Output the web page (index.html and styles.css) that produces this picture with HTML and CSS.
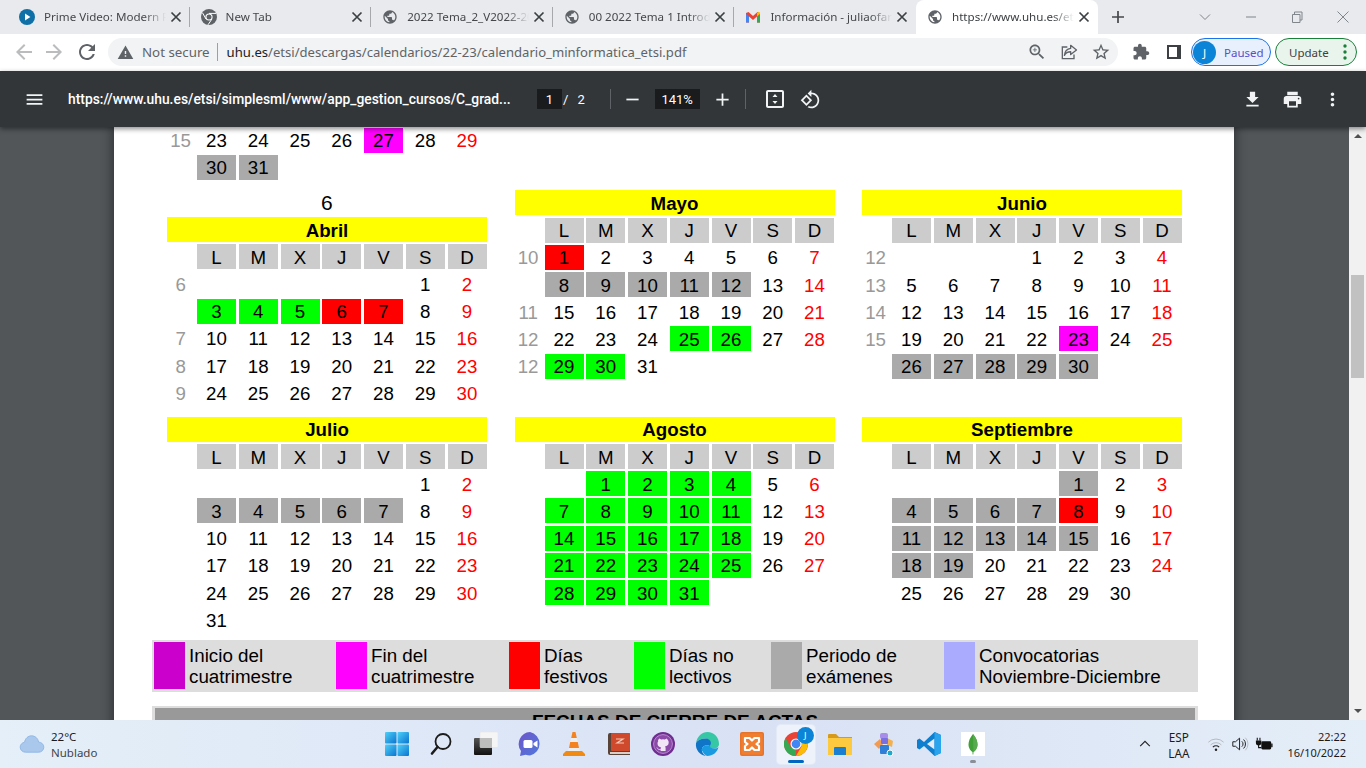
FILE: index.html
```html
<!DOCTYPE html>
<html lang="es">
<head>
    <meta charset="UTF-8">
    <title>calendario_minformatica_etsi.pdf</title>
    <link rel="stylesheet" href="styles.css">
</head>
<body>
    <svg class="defs" width="0" height="0">
        <symbol id="globe" viewBox="0 0 24 24"><path d="M12 2C6.48 2 2 6.48 2 12s4.48 10 10 10 10-4.48 10-10S17.52 2 12 2zm-1 17.93c-3.95-.49-7-3.85-7-7.93 0-.62.08-1.21.21-1.79L9 15v1c0 1.1.9 2 2 2v1.93zm6.9-2.54c-.26-.81-1-1.39-1.9-1.39h-1v-3c0-.55-.45-1-1-1H8v-2h2c.55 0 1-.45 1-1V7h2c1.1 0 2-.9 2-2v-.41c2.93 1.19 5 4.06 5 7.41 0 2.08-.8 3.97-2.1 5.39z"/></symbol>
        <symbol id="close" viewBox="0 0 16 16"><path d="M3.5 3.5l9 9M12.5 3.5l-9 9" stroke="currentColor" stroke-width="1.7" fill="none"/></symbol>
        <linearGradient id="win-grad" x1="0" y1="0" x2="1" y2="1"><stop offset="0" stop-color="#4fd0f8"/><stop offset="1" stop-color="#0a74d0"/></linearGradient>
        <linearGradient id="zoom-grad" x1="0" y1="0" x2="1" y2="1"><stop offset="0" stop-color="#6d55c9"/><stop offset="1" stop-color="#4f78dd"/></linearGradient>
        <linearGradient id="task-grad" x1="0" y1="0" x2="0" y2="1"><stop offset="0" stop-color="#555"/><stop offset="1" stop-color="#111"/></linearGradient>
    </svg>

    <!-- tabs -->
    <div class="tabstrip">
        <div class="tab">
            <svg class="favicon" viewBox="0 0 16 16"><circle cx="8" cy="8" r="8" fill="#0f70a8"/><path d="M6 4.6l5.4 3.4L6 11.4z" fill="#fff"/></svg>
            <span class="tab-title">Prime Video: Modern Family</span>
            <svg class="tab-close"><use href="#close"/></svg>
        </div>
        <div class="tab">
            <svg class="favicon" viewBox="0 0 16 16"><circle cx="8" cy="8" r="8" fill="#5f6368"/><circle cx="8" cy="8" r="3.6" fill="#fff"/><circle cx="8" cy="8" r="2.5" fill="#5f6368"/><path d="M8 4.4h7M5 10L1.6 4M10.8 10.2L7 15.8" stroke="#fff" stroke-width="1"/></svg>
            <span class="tab-title">New Tab</span>
            <svg class="tab-close"><use href="#close"/></svg>
        </div>
        <div class="tab">
            <svg class="favicon globe"><use href="#globe"/></svg>
            <span class="tab-title">2022 Tema_2_V2022-2023</span>
            <svg class="tab-close"><use href="#close"/></svg>
        </div>
        <div class="tab">
            <svg class="favicon globe"><use href="#globe"/></svg>
            <span class="tab-title">00 2022 Tema 1 Introducción</span>
            <svg class="tab-close"><use href="#close"/></svg>
        </div>
        <div class="tab no-sep">
            <svg class="favicon" viewBox="0 0 16 16"><path d="M1 13.5V4l2.5-1L8 7l4.5-4 2.5 1v9.5h-3V7.5L8 11 4 7.5v6z" fill="#ea4335"/><path d="M1 13.5h3V7.5L1 5z" fill="#4285f4"/><path d="M12 13.5h3V5l-3 2.5z" fill="#34a853"/><path d="M12 7.5l3-2.5V4l-1.2-1.2L12 4z" fill="#fbbc04"/></svg>
            <span class="tab-title">Información - juliaofarrill@gmail.com</span>
            <svg class="tab-close"><use href="#close"/></svg>
        </div>
        <div class="tab active">
            <svg class="favicon globe"><use href="#globe"/></svg>
            <span class="tab-title">https://www.uhu.es/etsi/descargas</span>
            <svg class="tab-close"><use href="#close"/></svg>
        </div>
        <svg class="new-tab" viewBox="0 0 16 16"><path d="M8 2v12M2 8h12" stroke="#45474a" stroke-width="1.7"/></svg>
        <div class="window-btns">
            <svg viewBox="0 0 16 16"><path d="M3 5.5l5 5 5-5" fill="none" stroke="#80868b"/></svg>
            <svg viewBox="0 0 16 16"><path d="M3 8h10" stroke="#80868b"/></svg>
            <svg viewBox="0 0 16 16"><path d="M3.5 5.5h7.5v8H3.5zM5.5 5.5V3H13v8h-2" fill="none" stroke="#80868b"/></svg>
            <svg viewBox="0 0 16 16"><path d="M2.5 2.5l11 11M13.5 2.5l-11 11" stroke="#80868b"/></svg>
        </div>
    </div>

    <!-- address bar -->
    <div class="toolbar">
        <svg class="nav faded" viewBox="0 0 24 24"><path d="M20 11H7.83l5.59-5.59L12 4l-8 8 8 8 1.41-1.41L7.83 13H20v-2z"/></svg>
        <svg class="nav faded" viewBox="0 0 24 24"><path d="M4 11h12.17l-5.59-5.59L12 4l8 8-8 8-1.41-1.41L16.17 13H4v-2z"/></svg>
        <svg class="nav reload" viewBox="0 0 24 24"><path d="M17.65 6.35C16.2 4.9 14.21 4 12 4c-4.42 0-7.99 3.58-7.99 8s3.57 8 7.99 8c3.73 0 6.84-2.55 7.73-6h-2.08c-.82 2.33-3.04 4-5.65 4-3.31 0-6-2.69-6-6s2.69-6 6-6c1.66 0 3.14.69 4.22 1.78L13 11h7V4l-2.35 2.35z"/></svg>
        <div class="omnibox">
            <svg class="warn" viewBox="0 0 24 24"><path d="M1 21h22L12 2 1 21zm12-3h-2v-2h2v2zm0-4h-2v-4h2v4z"/></svg>
            <span class="not-secure">Not secure</span>
            <span class="url"><b>uhu.es</b>/etsi/descargas/calendarios/22-23/calendario_minformatica_etsi.pdf</span>
            <div class="omni-actions">
                <svg viewBox="0 0 24 24"><path d="M15.5 14h-.79l-.28-.27C15.41 12.59 16 11.11 16 9.5 16 5.91 13.09 3 9.5 3S3 5.91 3 9.5 5.91 16 9.5 16c1.61 0 3.09-.59 4.23-1.57l.27.28v.79l5 4.99L20.49 19l-4.99-5zm-6 0C7.01 14 5 11.99 5 9.5S7.01 5 9.5 5 14 7.01 14 9.5 11.99 14 9.5 14z"/><path d="M12 10h-2v2H9v-2H7V9h2V7h1v2h2v1z"/></svg>
                <svg viewBox="0 0 24 24"><path d="M10 6H4v14h14v-5" fill="none" stroke="#5f6368" stroke-width="1.6"/><path d="M14 4l7 5.5-7 5.5v-3.3c-3.5 0-6 1.3-7.5 4.3.4-4.5 3-7.8 7.5-8.4z" fill="none" stroke="#5f6368" stroke-width="1.6" stroke-linejoin="round"/></svg>
                <svg viewBox="0 0 24 24"><path d="M22 9.24l-7.19-.62L12 2 9.19 8.63 2 9.24l5.46 4.73L5.82 21 12 17.27 18.18 21l-1.63-7.03L22 9.24zM12 15.4l-3.76 2.27 1-4.28-3.32-2.88 4.38-.38L12 6.1l1.71 4.04 4.38.38-3.32 2.88 1 4.28L12 15.4z"/></svg>
            </div>
        </div>
        <svg class="ext" viewBox="0 0 24 24"><path d="M20.5 11H19V7c0-1.1-.9-2-2-2h-4V3.5C13 2.12 11.88 1 10.5 1S8 2.12 8 3.5V5H4c-1.1 0-1.99.9-1.99 2v3.8H3.5c1.49 0 2.7 1.21 2.7 2.7s-1.21 2.7-2.7 2.7H2V20c0 1.1.9 2 2 2h3.8v-1.5c0-1.49 1.21-2.7 2.7-2.7 1.49 0 2.7 1.21 2.7 2.7V22H17c1.1 0 2-.9 2-2v-4h1.5c1.38 0 2.5-1.12 2.5-2.5S21.88 11 20.5 11z"/></svg>
        <div class="side-panel"></div>
        <div class="chip paused"><span class="avatar">J</span><span>Paused</span></div>
        <div class="chip update"><span>Update</span><svg viewBox="0 0 6 18"><circle cx="3" cy="3" r="1.7"/><circle cx="3" cy="9" r="1.7"/><circle cx="3" cy="15" r="1.7"/></svg></div>
    </div>

    <!-- pdf viewer toolbar -->
    <div class="pdfbar">
        <svg class="pdf-icon menu" viewBox="0 0 24 24"><path d="M3 18h18v-2H3v2zm0-5h18v-2H3v2zm0-7v2h18V6H3z"/></svg>
        <span class="pdf-title">https://www.uhu.es/etsi/simplesml/www/app_gestion_cursos/C_grad...</span>
        <span class="page-box">1</span>
        <span class="page-sep">/</span>
        <span class="page-total">2</span>
        <span class="pdf-divider first"></span>
        <svg class="pdf-icon" viewBox="0 0 24 24"><path d="M19 13H5v-2h14v2z"/></svg>
        <span class="zoom-box">141%</span>
        <svg class="pdf-icon" viewBox="0 0 24 24"><path d="M19 13h-6v6h-2v-6H5v-2h6V5h2v6h6v2z"/></svg>
        <span class="pdf-divider second"></span>
        <svg class="pdf-icon fit" viewBox="0 0 24 24"><path d="M19 3H5c-1.1 0-2 .9-2 2v14c0 1.1.9 2 2 2h14c1.1 0 2-.9 2-2V5c0-1.1-.9-2-2-2zm0 16H5V5h14v14z"/><path d="M12 7l2.5 3h-5zM12 17l-2.5-3h5z"/></svg>
        <svg class="pdf-icon" viewBox="0 0 24 24"><path d="M7.34 6.41L.86 12.9l6.49 6.48 6.49-6.48-6.5-6.49zM3.69 12.9l3.66-3.66L11 12.9l-3.66 3.66-3.65-3.66zm15.67-6.26C17.61 4.88 15.3 4 13 4V.76L8.76 5 13 9.24V6c1.79 0 3.58.68 4.95 2.05 2.73 2.73 2.73 7.17 0 9.9C16.58 19.32 14.79 20 13 20c-.97 0-1.94-.21-2.84-.61l-1.49 1.49C10.02 21.62 11.51 22 13 22c2.3 0 4.61-.88 6.36-2.64 3.52-3.51 3.52-9.21 0-12.72z"/></svg>
        <div class="pdf-right">
            <svg class="pdf-icon" viewBox="0 0 24 24"><path d="M19 9h-4V3H9v6H5l7 7 7-7zM5 18v2h14v-2H5z"/></svg>
            <svg class="pdf-icon" viewBox="0 0 24 24"><path d="M19 8H5c-1.66 0-3 1.34-3 3v6h4v4h12v-4h4v-6c0-1.66-1.34-3-3-3zm-3 11H8v-5h8v5zm3-7c-.55 0-1-.45-1-1s.45-1 1-1 1 .45 1 1-.45 1-1 1zm-1-9H6v4h12V3z"/></svg>
            <svg class="pdf-icon" viewBox="0 0 24 24"><path d="M12 8c1.1 0 2-.9 2-2s-.9-2-2-2-2 .9-2 2 .9 2 2 2zm0 2c-1.1 0-2 .9-2 2s.9 2 2 2 2-.9 2-2-.9-2-2-2zm0 6c-1.1 0-2 .9-2 2s.9 2 2 2 2-.9 2-2-.9-2-2-2z"/></svg>
        </div>
    </div>

    <div class="viewer">
        <div class="pdf-area">
            <div class="page">
                <div class="marzo">
                    <span class="wk">15</span><span>23</span><span>24</span><span>25</span><span>26</span><span class="mag">27</span><span>28</span><span class="sun">29</span>
                    <span></span><span class="exam">30</span><span class="exam">31</span>
                </div>

                <div class="months first-row">
                    <div class="month">
                        <span class="big">6</span>
                        <span class="title">Abril</span>
                        <span></span><span class="hd">L</span><span class="hd">M</span><span class="hd">X</span><span class="hd">J</span><span class="hd">V</span><span class="hd">S</span><span class="hd">D</span>
                        <span class="wk">6</span><span></span><span></span><span></span><span></span><span></span><span>1</span><span class="sun">2</span>
                        <span></span><span class="green">3</span><span class="green">4</span><span class="green">5</span><span class="red">6</span><span class="red">7</span><span>8</span><span class="sun">9</span>
                        <span class="wk">7</span><span>10</span><span>11</span><span>12</span><span>13</span><span>14</span><span>15</span><span class="sun">16</span>
                        <span class="wk">8</span><span>17</span><span>18</span><span>19</span><span>20</span><span>21</span><span>22</span><span class="sun">23</span>
                        <span class="wk">9</span><span>24</span><span>25</span><span>26</span><span>27</span><span>28</span><span>29</span><span class="sun">30</span>
                    </div>
                    <div class="month">
                        <span class="title">Mayo</span>
                        <span></span><span class="hd">L</span><span class="hd">M</span><span class="hd">X</span><span class="hd">J</span><span class="hd">V</span><span class="hd">S</span><span class="hd">D</span>
                        <span class="wk">10</span><span class="red">1</span><span>2</span><span>3</span><span>4</span><span>5</span><span>6</span><span class="sun">7</span>
                        <span></span><span class="exam">8</span><span class="exam">9</span><span class="exam">10</span><span class="exam">11</span><span class="exam">12</span><span>13</span><span class="sun">14</span>
                        <span class="wk">11</span><span>15</span><span>16</span><span>17</span><span>18</span><span>19</span><span>20</span><span class="sun">21</span>
                        <span class="wk">12</span><span>22</span><span>23</span><span>24</span><span class="green">25</span><span class="green">26</span><span>27</span><span class="sun">28</span>
                        <span class="wk">12</span><span class="green">29</span><span class="green">30</span><span>31</span>
                    </div>
                    <div class="month">
                        <span class="title">Junio</span>
                        <span></span><span class="hd">L</span><span class="hd">M</span><span class="hd">X</span><span class="hd">J</span><span class="hd">V</span><span class="hd">S</span><span class="hd">D</span>
                        <span class="wk">12</span><span></span><span></span><span></span><span>1</span><span>2</span><span>3</span><span class="sun">4</span>
                        <span class="wk">13</span><span>5</span><span>6</span><span>7</span><span>8</span><span>9</span><span>10</span><span class="sun">11</span>
                        <span class="wk">14</span><span>12</span><span>13</span><span>14</span><span>15</span><span>16</span><span>17</span><span class="sun">18</span>
                        <span class="wk">15</span><span>19</span><span>20</span><span>21</span><span>22</span><span class="mag">23</span><span>24</span><span class="sun">25</span>
                        <span></span><span class="exam">26</span><span class="exam">27</span><span class="exam">28</span><span class="exam">29</span><span class="exam">30</span>
                    </div>
                </div>

                <div class="months second-row">
                    <div class="month">
                        <span class="title">Julio</span>
                        <span></span><span class="hd">L</span><span class="hd">M</span><span class="hd">X</span><span class="hd">J</span><span class="hd">V</span><span class="hd">S</span><span class="hd">D</span>
                        <span></span><span></span><span></span><span></span><span></span><span></span><span>1</span><span class="sun">2</span>
                        <span></span><span class="exam">3</span><span class="exam">4</span><span class="exam">5</span><span class="exam">6</span><span class="exam">7</span><span>8</span><span class="sun">9</span>
                        <span></span><span>10</span><span>11</span><span>12</span><span>13</span><span>14</span><span>15</span><span class="sun">16</span>
                        <span></span><span>17</span><span>18</span><span>19</span><span>20</span><span>21</span><span>22</span><span class="sun">23</span>
                        <span></span><span>24</span><span>25</span><span>26</span><span>27</span><span>28</span><span>29</span><span class="sun">30</span>
                        <span></span><span>31</span>
                    </div>
                    <div class="month">
                        <span class="title">Agosto</span>
                        <span></span><span class="hd">L</span><span class="hd">M</span><span class="hd">X</span><span class="hd">J</span><span class="hd">V</span><span class="hd">S</span><span class="hd">D</span>
                        <span></span><span></span><span class="green">1</span><span class="green">2</span><span class="green">3</span><span class="green">4</span><span>5</span><span class="sun">6</span>
                        <span></span><span class="green">7</span><span class="green">8</span><span class="green">9</span><span class="green">10</span><span class="green">11</span><span>12</span><span class="sun">13</span>
                        <span></span><span class="green">14</span><span class="green">15</span><span class="green">16</span><span class="green">17</span><span class="green">18</span><span>19</span><span class="sun">20</span>
                        <span></span><span class="green">21</span><span class="green">22</span><span class="green">23</span><span class="green">24</span><span class="green">25</span><span>26</span><span class="sun">27</span>
                        <span></span><span class="green">28</span><span class="green">29</span><span class="green">30</span><span class="green">31</span>
                    </div>
                    <div class="month">
                        <span class="title">Septiembre</span>
                        <span></span><span class="hd">L</span><span class="hd">M</span><span class="hd">X</span><span class="hd">J</span><span class="hd">V</span><span class="hd">S</span><span class="hd">D</span>
                        <span></span><span></span><span></span><span></span><span></span><span class="exam">1</span><span>2</span><span class="sun">3</span>
                        <span></span><span class="exam">4</span><span class="exam">5</span><span class="exam">6</span><span class="exam">7</span><span class="red">8</span><span>9</span><span class="sun">10</span>
                        <span></span><span class="exam">11</span><span class="exam">12</span><span class="exam">13</span><span class="exam">14</span><span class="exam">15</span><span>16</span><span class="sun">17</span>
                        <span></span><span class="exam">18</span><span class="exam">19</span><span>20</span><span>21</span><span>22</span><span>23</span><span class="sun">24</span>
                        <span></span><span>25</span><span>26</span><span>27</span><span>28</span><span>29</span><span>30</span>
                    </div>
                </div>

                <div class="legend">
                    <div class="legend-item"><span class="swatch c-inicio"></span><span>Inicio del<br>cuatrimestre</span></div>
                    <div class="legend-item"><span class="swatch c-fin"></span><span>Fin del<br>cuatrimestre</span></div>
                    <div class="legend-item"><span class="swatch c-festivo"></span><span>Días<br>festivos</span></div>
                    <div class="legend-item"><span class="swatch c-nolectivo"></span><span>Días no<br>lectivos</span></div>
                    <div class="legend-item"><span class="swatch c-examen"></span><span>Periodo de<br>exámenes</span></div>
                    <div class="legend-item"><span class="swatch c-convoc"></span><span>Convocatorias<br>Noviembre-Diciembre</span></div>
                </div>

                <div class="actas"><div class="actas-head">FECHAS DE CIERRE DE ACTAS</div></div>
            </div>
        </div>
        <div class="scrollbar">
            <span class="arrow up"></span>
            <span class="thumb"></span>
            <span class="arrow down"></span>
        </div>
    </div>

    <!-- windows taskbar -->
    <div class="taskbar">
        <div class="weather">
            <svg viewBox="0 0 28 22" width="26" height="20"><path d="M7 20c-3.3 0-6-2.4-6-5.5 0-2.8 2-5 4.8-5.4C6.5 5 9.6 2 13.5 2c4 0 7.2 3 7.7 6.8 3 .2 5.8 2.5 5.8 5.7 0 3-2.5 5.5-5.8 5.5z" fill="#a9c8ec" stroke="#8fb5e3"/></svg>
            <div class="weather-text"><span>22°C</span><span class="muted">Nublado</span></div>
        </div>
        <div class="apps">
            <div class="app"><svg viewBox="0 0 24 24" width="24" height="24"><rect width="11.5" height="11.5" rx="1" fill="url(#win-grad)"/><rect x="12.5" width="11.5" height="11.5" rx="1" fill="url(#win-grad)"/><rect y="12.5" width="11.5" height="11.5" rx="1" fill="url(#win-grad)"/><rect x="12.5" y="12.5" width="11.5" height="11.5" rx="1" fill="url(#win-grad)"/></svg></div>
            <div class="app"><svg viewBox="0 0 24 24" width="24" height="24"><circle cx="14" cy="9.5" r="7.5" fill="none" stroke="#1c1c1c" stroke-width="1.8"/><path d="M8.5 15l-5.5 6.5" stroke="#1c1c1c" stroke-width="2.6" stroke-linecap="round"/></svg></div>
            <div class="app"><svg viewBox="0 0 24 24" width="24" height="24"><rect y="6" width="18" height="17" rx="1" fill="url(#task-grad)"/><rect x="6" width="18" height="15.5" rx="1" fill="#f5f5f5" stroke="#e0e0e0" stroke-width=".5"/><rect x="6" y="6" width="12" height="9.5" fill="#bdbdbd"/></svg></div>
            <div class="app"><svg viewBox="0 0 24 24" width="24" height="24"><path d="M12 0a12 12 0 0 1 0 23.5c-1.5 0-3-.3-4.3-.8L2 24l1-5A12 12 0 0 1 12 0z" fill="url(#zoom-grad)"/><rect x="5.5" y="8" width="9" height="8" rx="1.5" fill="#fff"/><path d="M15.5 11l4-2.500v7l-4-2.500z" fill="#fff"/></svg></div>
            <div class="app"><svg viewBox="0 0 24 24" width="24" height="24"><path d="M10.5 0h3l1.300 6H9.200zM8.200 10h7.600l1.200 6H7z" fill="#f58220"/><path d="M9.200 6h5.600l1 4H8.200zM7 16h10l1 3H6z" fill="#eee"/><path d="M4 19h16l3 3v2H1v-2z" fill="#f08a12"/></svg></div>
            <div class="app"><svg viewBox="0 0 24 24" width="24" height="24"><path d="M1 3a2 2 0 0 1 2-2h19l1 1v18H3v2h20v1H3a2 2 0 0 1-2-2z" fill="#594237"/><rect x="4" y="1" width="19" height="18" rx="1" fill="#cf4a2c"/><rect x="3" y="20" width="20" height="2" fill="#d8d0c8"/><path d="M9 7h7l-6 4h7" fill="none" stroke="#f6c9b8" stroke-width="1.2"/></svg></div>
            <div class="app"><svg viewBox="0 0 24 24" width="24" height="24"><circle cx="12" cy="12" r="12" fill="#6f2c91"/><circle cx="12" cy="12" r="9.4" fill="#8b4aa8" stroke="#b78ccd" stroke-width="1"/><path d="M7 8.200l1.200-1.700 2 1.100a7 7 0 0 1 3.600 0l2-1.100L17 8.200c.5.700.7 1.500.7 2.300 0 2.600-1.700 3.700-3.700 4 .4.400.6.900.6 1.600V19h-5v-1.200c-1.500.3-2.600 0-3.200-1.200-.3-.5-.7-.8-1.200-1 1 0 1.600.5 2.100 1.100.5.500 1.200.6 2.300.3 0-.7.200-1.200.6-1.500-2-.3-3.700-1.400-3.700-4 0-.8.200-1.600.7-2.300z" fill="#f0e6f5"/></svg></div>
            <div class="app"><svg viewBox="0 0 24 24" width="24" height="24"><path d="M1 11C2 4.500 7 0 12.500 0 19 0 24 5 24 12c0 2.500-2 4.500-5 4.500-2.700 0-4.500-1-4.500-2.500 0-1 1-1.300 1-3 0-2.500-2.500-4.500-5.500-4.500C6 6.500 2.500 8 1 11z" fill="#36c7a5"/><path d="M1 11c1.500-3 5-4.500 9.500-4.500 3 0 5.500 2 5.500 4.500 0 1.700-1 2-1 3-3.500-2-9 0-8 5 .4 2 2 4 4 5C5.500 23.500 0 18 1 11z" fill="#1074c7"/><path d="M7 19c-1-5 4.500-7 8-5 0 1.500 1.800 2.500 4.500 2.500 1.500 0 3-.5 4-1.500-1 5-5.500 9-11.500 9-2-1-4-3-4.500-5z" fill="#1a9ae0"/></svg></div>
            <div class="app"><svg viewBox="0 0 24 24" width="24" height="24"><rect width="24" height="24" rx="2" fill="#e8742a"/><rect x="1.5" y="1.5" width="21" height="21" rx="1" fill="#ef7e30"/><path d="M5 6h4.500L12 8.500 14.500 6H19v4l-2.500 2 2.500 2v4h-4.500L12 15.500 9.500 18H5v-4l2.500-2L5 10z" fill="none" stroke="#fff" stroke-width="2.2" stroke-linejoin="round"/></svg></div>
            <div class="app current">
                <svg viewBox="0 0 24 24" width="24" height="24"><circle cx="12" cy="12" r="12" fill="#ea4335"/><path d="M12 24A12 12 0 0 1 1.600 6L7 15.500l5 1.500z" fill="#34a853"/><path d="M12 24l5.500-9.500L12 7h10.800A12 12 0 0 1 12 24z" fill="#fbbc04"/><circle cx="12" cy="12" r="5.5" fill="#fff"/><circle cx="12" cy="12" r="4.4" fill="#4285f4"/></svg>
                <span class="badge">J</span>
                <span class="running"></span>
            </div>
            <div class="app"><svg viewBox="0 0 24 24" width="24" height="24"><path d="M0 3a1 1 0 0 1 1-1h7l3 3h13v4H0z" fill="#d79a1b"/><rect y="6" width="24" height="17" fill="#fdc93e"/><path d="M6 23v-7a1 1 0 0 1 1-1h10a1 1 0 0 1 1 1v7z" fill="#1a7fd0"/></svg></div>
            <div class="app"><svg viewBox="0 0 24 24" width="24" height="24"><path d="M2 12l6-5 3 5-4 5z" fill="#f29a52"/><path d="M15 6l6 3-1 6-5-2z" fill="#f2b04e"/><rect x="8" y="1" width="8" height="6" rx="2" fill="#a78ce8"/><rect x="9" y="6" width="7" height="6" rx="1" fill="#7a6fe0"/><rect x="8" y="13" width="9" height="9" rx="1" fill="#2f7fd8"/><circle cx="18" cy="21" r="3" fill="#1fa8c9" stroke="#fff" stroke-width="1"/></svg></div>
            <div class="app"><svg viewBox="0 0 24 24" width="24" height="24"><path d="M17.5 0L24 3v18l-6.500 3L7 14l-4.500 3.500L0 16V8l2.500-1.500L7 10z" fill="#0e7fcf"/><path d="M17.5 6.500L10 12l7.500 5.500z" fill="#e4ecf8"/><path d="M17.5 0L24 3v18l-6.500 3z" fill="#2aa4ec"/></svg></div>
            <div class="app"><svg viewBox="0 0 24 24" width="24" height="24"><rect width="24" height="24" fill="#fff"/><path d="M12 2c3 3.500 4.500 7 4.500 10.500 0 4-2.500 6.500-4 7.500l-.2 2.500h-.7L11.500 20C10 19 7.500 16.500 7.500 12.500 7.500 9 9 5.500 12 2z" fill="#3fa037"/><path d="M12 2c3 3.500 4.500 7 4.500 10.500 0 4-2.500 6.500-4 7.500z" fill="#58aa50"/></svg><span class="open-dot"></span></div>
        </div>
        <div class="tray">
            <svg class="tray-chevron" viewBox="0 0 16 16"><path d="M2.5 10.5L8 5l5.500 5.500" fill="none" stroke="#222" stroke-width="1.3"/></svg>
            <div class="ime"><span>ESP</span><span>LAA</span></div>
            <svg class="tray-icon" viewBox="0 0 20 20"><path d="M1.500 8a12 12 0 0 1 17 0M4 11a8.500 8.500 0 0 1 12 0" fill="none" stroke="#b6bac0" stroke-width="1.1"/><path d="M6.500 13.500a5 5 0 0 1 7 0" fill="none" stroke="#222" stroke-width="1.2"/><circle cx="10" cy="16.500" r="1.4" fill="#222"/></svg>
            <svg class="tray-icon" viewBox="0 0 20 20"><path d="M2 7.500h3L9.500 3.500v13L5 12.500H2z" fill="none" stroke="#222" stroke-width="1.1"/><path d="M12 7a4 4 0 0 1 0 6M14 5a7 7 0 0 1 0 10" fill="none" stroke="#222" stroke-width="1.1"/><path d="M16 3a10 10 0 0 1 0 14" fill="none" stroke="#b6bac0"/></svg>
            <svg class="tray-icon" viewBox="0 0 20 20"><rect x="7" y="7" width="11" height="9" rx="1.5" fill="#111"/><rect x="18" y="9.500" width="1.500" height="4" fill="#111"/><path d="M2.500 3v3M5.500 3v3M4 11v3h3" fill="none" stroke="#111" stroke-width="1.2"/><path d="M1 6h6v2.500a3 3 0 0 1-6 0z" fill="#111"/></svg>
            <div class="clock"><span>22:22</span><span>16/10/2022</span></div>
        </div>
    </div>
</body>
</html>
```

FILE: styles.css
```css
/* Reset some default styles */
* {
    margin: 0;
    padding: 0;
    box-sizing: border-box;
}

body {
    width: 1366px;
    height: 768px;
    overflow: hidden;
    display: flex;
    flex-direction: column;
    font-family: "Noto Sans", "Open Sans", sans-serif;
    background-color: #fff;
    color: #000;
}

.defs {
    position: absolute;
}

/* tabs */
.tabstrip {
    height: 34px;
    flex: none;
    display: flex;
    align-items: stretch;
    padding-left: 8px;
    background-color: #e8eaed;
}

.tab {
    width: 181.6px;
    display: flex;
    align-items: center;
    padding: 0 6px 0 11px;
    position: relative;
    font-size: 11.6px;
    color: #45474a;
}

.tab::after {
    content: "";
    position: absolute;
    right: 0;
    top: 7px;
    bottom: 7px;
    width: 1px;
    background-color: #a6a8ab;
}

.tab.no-sep::after {
    display: none;
}

.tab.active {
    background-color: #fff;
    border-radius: 8px 8px 0 0;
    color: #3c4043;
}

.tab.active::after {
    display: none;
}

.favicon {
    width: 16px;
    height: 16px;
    flex: none;
    margin-right: 9px;
}

.globe {
    fill: #5f6368;
}

.tab-title {
    flex: 1;
    padding-bottom: 2px;
    overflow: hidden;
    white-space: nowrap;
    -webkit-mask-image: linear-gradient(to left, transparent, #000 22px);
    mask-image: linear-gradient(to left, transparent, #000 22px);
}

.tab-close {
    width: 16px;
    height: 16px;
    flex: none;
    color: #3c4043;
    margin-left: 2px;
}

.new-tab {
    width: 16px;
    height: 16px;
    margin: 9px 0 0 12px;
}

.window-btns {
    margin-left: auto;
    display: flex;
    padding-right: 15px;
    gap: 30px;
    align-items: flex-start;
    padding-top: 9px;
}

.window-btns svg {
    width: 16px;
    height: 16px;
}

/* address bar */
.toolbar {
    height: 37px;
    flex: none;
    display: flex;
    align-items: flex-start;
    padding: 4px 8px 0 12px;
    background-color: #fff;
}

.nav {
    width: 24px;
    height: 24px;
    margin: 2px 6px 0 0;
    fill: #5f6368;
}

.nav.faded {
    fill: #babcbe;
}

.nav.reload {
    margin-left: 3px;
}

.omnibox {
    width: 1010px;
    height: 28px;
    margin-left: 3px;
    border-radius: 14px;
    background-color: #f1f3f4;
    display: flex;
    align-items: center;
    padding-left: 9px;
    font-size: 13.3px;
    color: #5f6368;
}

.warn {
    width: 17px;
    height: 17px;
    fill: #5f6368;
    margin-right: 8px;
}

.not-secure {
    padding-right: 7px;
    border-right: 1px solid #9aa0a6;
    line-height: 18px;
    margin-right: 9px;
}

.url {
    white-space: nowrap;
    font-size: 13.1px;
}

.url b {
    font-weight: 400;
    color: #202124;
}

.omni-actions {
    margin-left: auto;
    display: flex;
    gap: 12px;
    padding-right: 7px;
}

.omni-actions svg {
    width: 20px;
    height: 20px;
    fill: #5f6368;
}

.ext {
    width: 18px;
    height: 18px;
    margin: 5px 0 0 14px;
    fill: #5f6368;
}

.side-panel {
    width: 14px;
    height: 14px;
    margin: 7px 0 0 17px;
    border: 2px solid #3c4043;
    border-right-width: 4px;
}

.chip {
    height: 28px;
    border-radius: 14px;
    display: flex;
    align-items: center;
    font-size: 11.5px;
}

.paused {
    width: 80px;
    margin-left: 10px;
    border: 1px solid #1a73e8;
    background-color: #e8f0fe;
    color: #5b4fc4;
    padding-left: 1px;
    gap: 8px;
}

.avatar {
    width: 23px;
    height: 23px;
    border-radius: 50%;
    background-color: #0b84d8;
    color: #fff;
    display: flex;
    align-items: center;
    justify-content: center;
}

.update {
    width: 82px;
    margin-left: 4px;
    border: 1px solid #188038;
    background-color: #e9f4ec;
    color: #3c4043;
    padding-left: 13px;
}

.update svg {
    width: 6px;
    height: 18px;
    margin-left: 13px;
    fill: #188038;
}

/* pdf toolbar */
.pdfbar {
    height: 56px;
    flex: none;
    display: flex;
    align-items: center;
    padding-left: 23.5px;
    background-color: #323639;
    color: #fff;
    font-family: Roboto, "Liberation Sans", sans-serif;
    font-size: 13px;
    position: relative;
    z-index: 2;
    box-shadow: 0 2px 5px rgba(0, 0, 0, 0.45);
}

.pdf-icon {
    width: 21px;
    height: 21px;
    flex: none;
    fill: #f1f3f4;
}

.pdf-icon.menu {
    margin-right: 23.5px;
}

.pdf-title {
    width: 444px;
    font-size: 13.85px;
    font-weight: 500;
    white-space: nowrap;
    overflow: hidden;
    margin-right: 25px;
}

.page-box {
    width: 25px;
    height: 20px;
    background-color: #191b1c;
    display: flex;
    align-items: center;
    justify-content: center;
}

.page-sep {
    margin: 0 9px 0 1px;
}

.page-total {
    margin-right: 25px;
}

.pdf-divider {
    width: 1px;
    height: 20px;
    background-color: #5f6368;
}

.pdf-divider.first {
    margin-right: 11.5px;
}

.pdf-divider.second {
    margin: 0 17px 0 11.5px;
}

.zoom-box {
    width: 45px;
    height: 20px;
    background-color: #191b1c;
    display: flex;
    align-items: center;
    justify-content: center;
    margin: 0 12.5px 0 11.5px;
}

.pdf-icon.fit {
    width: 24px;
    height: 24px;
    margin-right: 13.5px;
}

.pdf-right {
    margin-left: auto;
    display: flex;
    gap: 19px;
    padding-right: 23.5px;
}

/* viewer */
.viewer {
    flex: 1;
    min-height: 0;
    display: flex;
}

.pdf-area {
    flex: 1;
    min-width: 0;
    padding-right: 1px;
    background-color: #525659;
    display: flex;
    justify-content: center;
    overflow: hidden;
}

.scrollbar {
    width: 17px;
    flex: none;
    background-color: #f1f1f1;
    display: flex;
    flex-direction: column;
    align-items: center;
}

.thumb {
    width: 13px;
    height: 103px;
    background-color: #c1c1c1;
    margin-top: 137px;
}

.arrow {
    width: 0;
    height: 0;
    border-left: 4px solid transparent;
    border-right: 4px solid transparent;
}

.arrow.up {
    border-bottom: 4px solid #505050;
    margin-top: 7px;
}

.arrow.down {
    border-top: 4px solid #505050;
    margin-top: auto;
    margin-bottom: 7px;
}

/* pdf page */
.page {
    width: 1120px;
    height: 640px;
    flex: none;
    background-color: #fff;
    padding: 0 36px 0 38px;
    font-family: "Liberation Sans", Arial, sans-serif;
    font-size: 18.7px;
    box-shadow: 0 0 10px 2px rgba(0, 0, 0, 0.4);
}

.marzo,
.month {
    display: grid;
    grid-template-columns: 27.25px repeat(7, 39px);
    grid-auto-rows: 25px;
    column-gap: 2.75px;
    row-gap: 2.2px;
}

.marzo {
    margin: 0.6px 0 0 15px;
}

.marzo span,
.month span {
    display: flex;
    align-items: center;
    justify-content: center;
    line-height: 25px;
    padding-top: 1px;
}

.months {
    display: grid;
    grid-template-columns: repeat(3, 320px);
    column-gap: 27.5px;
    margin-left: 15px;
}

.first-row {
    margin-top: 10.2px;
}

.first-row .month + .month {
    margin-top: 0.5px;
}

.second-row {
    margin-top: 11.6px;
}

.month .big {
    grid-column: 1 / -1;
    font-size: 21px;
}

.month .title {
    grid-column: 1 / -1;
    margin-right: -0.5px;
    background-color: #ff0;
    font-weight: bold;
}

.hd {
    background-color: #ccc;
}

.wk {
    color: #999;
}

.sun {
    color: #f00;
}

.green {
    background-color: #0f0;
}

.red {
    background-color: #f00;
}

.mag {
    background-color: #f0f;
}

.exam {
    background-color: #aaa;
}

/* legend */
.legend {
    height: 52px;
    margin-top: 7.6px;
    padding: 2px 0 0 2px;
    background-color: #ddd;
    display: grid;
    grid-template-columns: 182px 173px 125px 137px 173px 1fr;
    font-size: 18.8px;
    line-height: 21px;
}

.legend-item {
    display: flex;
    align-items: center;
    height: 47px;
    gap: 4px;
}

.legend-item span:last-child {
    padding-top: 2px;
}

.swatch {
    width: 31px;
    height: 47px;
    flex: none;
}

.c-inicio { background-color: #c0c; }
.c-fin { background-color: #f0f; }
.c-festivo { background-color: #f00; }
.c-nolectivo { background-color: #0f0; }
.c-examen { background-color: #aaa; }
.c-convoc { background-color: #aaf; }

.actas {
    margin-top: 14px;
    padding: 2px 3px 0;
    background-color: #ddd;
}

.actas-head {
    height: 27px;
    font-size: 18.95px;
    line-height: 27px;
    text-align: center;
    font-weight: bold;
    background-color: #999;
}

/* taskbar */
.taskbar {
    height: 48px;
    flex: none;
    display: flex;
    align-items: center;
    position: relative;
    z-index: 3;
    background: linear-gradient(90deg, #e4eff8 0%, #dfe8f7 30%, #d9e2f5 55%, #dfe8f6 80%, #e4eef8 100%);
    color: #1b1b1b;
    font-size: 11.5px;
}

.weather {
    width: 375px;
    display: flex;
    align-items: center;
    gap: 6px;
    padding-left: 19px;
}

.weather-text {
    display: flex;
    flex-direction: column;
    padding-top: 2px;
    line-height: 16px;
}

.muted {
    color: #444;
}

.apps {
    display: flex;
}

.app {
    width: 44.3px;
    height: 40px;
    display: flex;
    align-items: center;
    justify-content: center;
    position: relative;
}

.app svg {
    position: relative;
}

.app.current::before {
    content: "";
    position: absolute;
    left: 3px;
    right: 3px;
    top: 1px;
    bottom: 0;
    background-color: #eef3fb;
    border-radius: 4px;
    box-shadow: 0 0 0 1px #e4eaf5;
}

.badge {
    position: absolute;
    left: 23px;
    top: 3px;
    width: 17px;
    height: 17px;
    border-radius: 50%;
    background-color: #0b84d8;
    color: #fff;
    font-size: 9px;
    line-height: 17px;
    text-align: center;
}

.running {
    position: absolute;
    left: 14px;
    bottom: 1px;
    width: 16px;
    height: 3px;
    border-radius: 2px;
    background-color: #0067c0;
}

.open-dot {
    position: absolute;
    left: 19px;
    bottom: 1px;
    width: 6px;
    height: 3px;
    border-radius: 2px;
    background-color: #8a8e96;
}

.tray {
    margin-left: auto;
    display: flex;
    align-items: center;
    padding-right: 20px;
}

.tray-chevron {
    width: 14px;
    height: 14px;
    margin-right: 16.5px;
}

.ime {
    display: flex;
    flex-direction: column;
    align-items: center;
    padding-top: 2px;
    font-size: 11.8px;
    line-height: 16px;
    margin-right: 18px;
}

.tray-icon {
    width: 18px;
    height: 18px;
    margin-right: 6px;
}

.clock {
    display: flex;
    flex-direction: column;
    align-items: flex-end;
    padding-top: 2px;
    font-size: 11px;
    line-height: 16px;
    margin-left: 8px;
}
```
